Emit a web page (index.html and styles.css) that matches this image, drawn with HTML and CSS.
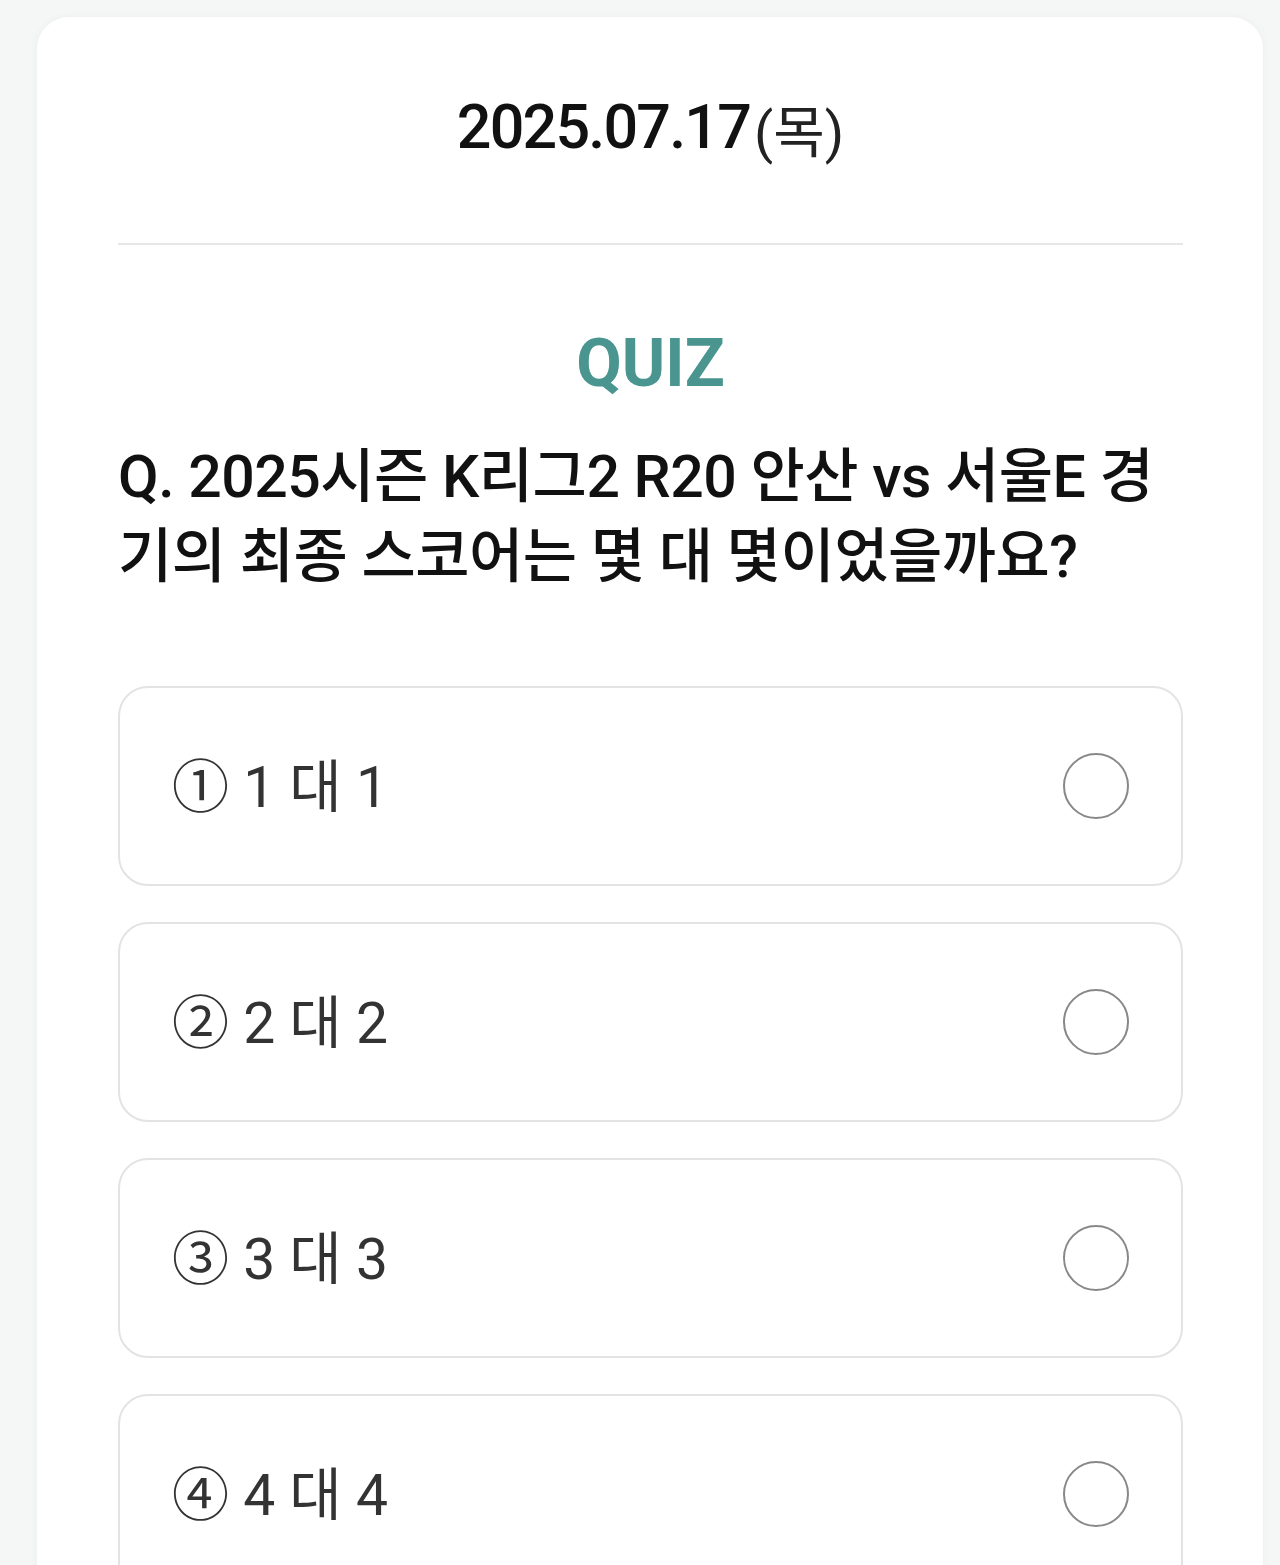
FILE: index.html
```html
<!DOCTYPE html>
<html lang="ko">
<head>
    <meta charset="UTF-8">
    <meta name="viewport" content="width=device-width, initial-scale=1.0">
    <title>오늘의 퀴즈</title>
    <link rel="stylesheet" href="styles.css">
</head>
<body>

    <div class="page">
        <div class="card">
            <!-- 날짜 -->
            <div class="date">
                <span class="date-num">2025.07.17</span><span class="date-day">(목)</span>
            </div>

            <!-- 퀴즈 -->
            <h2 class="quiz-title">QUIZ</h2>
            <p class="question">Q. 2025시즌 K리그2 R20 안산 vs 서울E 경기의 최종 스코어는 몇 대 몇이었을까요?</p>

            <!-- 보기 -->
            <ul class="options">
                <li class="option">
                    <span class="option-text">① 1 대 1</span>
                    <span class="radio"></span>
                </li>
                <li class="option">
                    <span class="option-text">② 2 대 2</span>
                    <span class="radio"></span>
                </li>
                <li class="option">
                    <span class="option-text">③ 3 대 3</span>
                    <span class="radio"></span>
                </li>
                <li class="option">
                    <span class="option-text">④ 4 대 4</span>
                    <span class="radio"></span>
                </li>
            </ul>
        </div>
    </div>

</body>
</html>
```

FILE: styles.css
```css
body {
    margin: 0;
    padding: 0;
    background-color: #f5f7f7;
    font-family: Roboto, "Noto Sans CJK KR", sans-serif;
    color: #111;
}

.page {
    padding: 17px 17px 0 37px;
}

.card {
    background-color: #fff;
    border-radius: 32px 32px 0 0;
    padding: 0 80px 40px 81px;
    box-shadow: 0 0 8px rgba(0, 0, 0, 0.04);
}

.date {
    height: 220px;
    padding-bottom: 6px;
    display: flex;
    align-items: center;
    justify-content: center;
    border-bottom: 2px solid #e6e6e6;
}

.date-num {
    font-size: 61px;
    font-weight: 500;
    letter-spacing: -1.8px;
}

.date-day {
    font-size: 56px;
    font-weight: 400;
    color: #222;
    margin-left: 4px;
}

.quiz-title {
    margin: 86px 0 0;
    font-size: 66px;
    line-height: 1;
    font-weight: 700;
    text-align: center;
    color: #4a958f;
}

.question {
    margin: 40px 0 0;
    font-size: 59px;
    line-height: 80px;
    font-weight: 500;
    letter-spacing: -0.5px;
}

.options {
    list-style: none;
    margin: 89px 0 0;
    padding: 0;
    display: flex;
    flex-direction: column;
    gap: 36px;
}

.option {
    height: 200px;
    box-sizing: border-box;
    display: flex;
    align-items: center;
    justify-content: space-between;
    padding: 0 52px;
    border: 2px solid #e3e3e3;
    border-radius: 30px;
}

.option-text {
    font-size: 57px;
    color: #333;
    margin-bottom: 8px;
}

.radio {
    width: 62px;
    height: 62px;
    border: 2px solid #888;
    border-radius: 50%;
}
```
